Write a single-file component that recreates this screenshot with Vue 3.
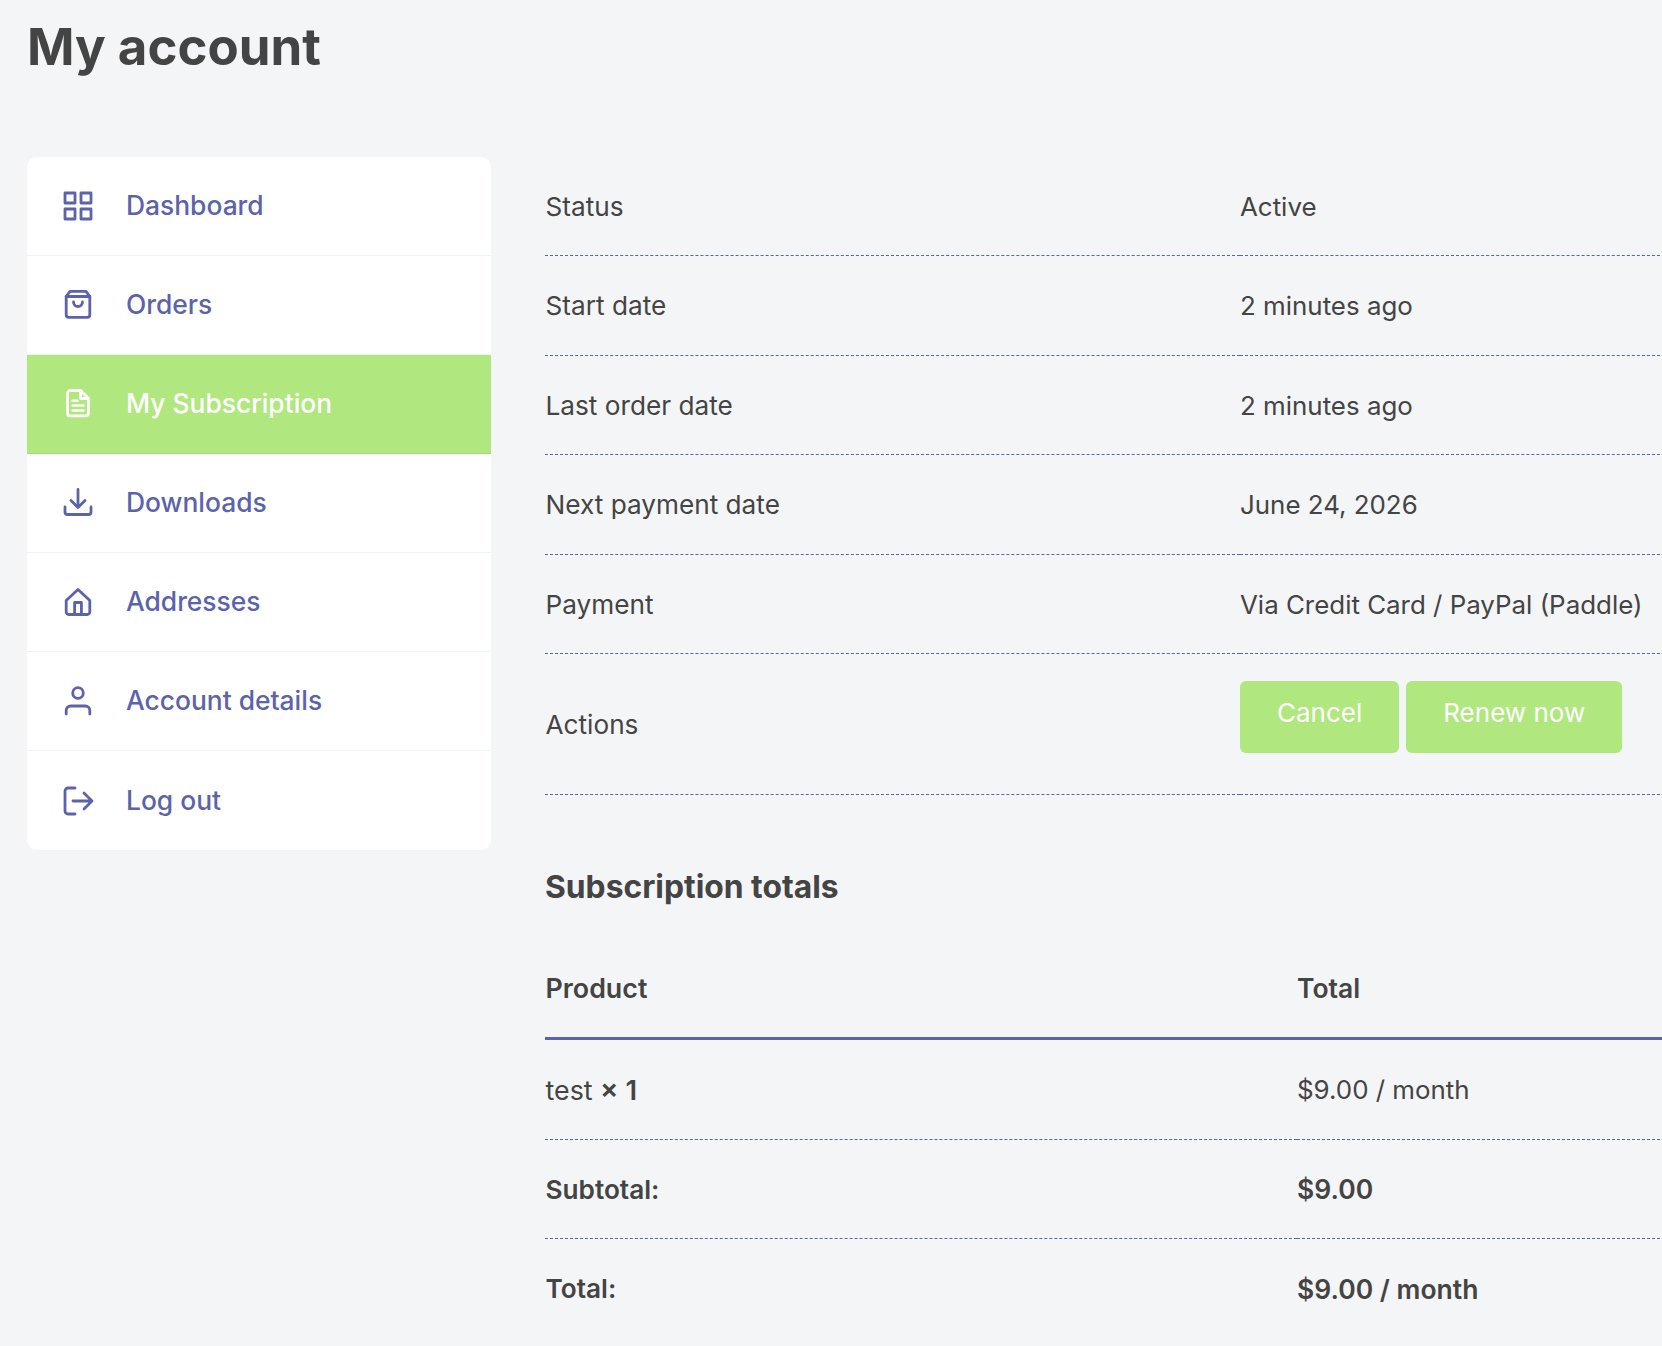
<script setup>
const menu = [
  { label: "Dashboard", icon: "grid" },
  { label: "Orders", icon: "bag" },
  { label: "My Subscription", icon: "doc", active: true },
  { label: "Downloads", icon: "download" },
  { label: "Addresses", icon: "home" },
  { label: "Account details", icon: "user" },
  { label: "Log out", icon: "logout" }
];

const details = [
  ["Status", "Active"],
  ["Start date", "2 minutes ago"],
  ["Last order date", "2 minutes ago"],
  ["Next payment date", "June 24, 2026"],
  ["Payment", "Via Credit Card / PayPal (Paddle)"]
];
</script>

<template>
  <div class="page">
    <h1>My account</h1>
    <div class="layout">
      <nav class="menu">
        <a v-for="item in menu" :key="item.label" class="menu-item" :class="{ active: item.active }" href="#">
          <svg class="icon" viewBox="0 0 32 32" fill="none" stroke="currentColor" stroke-width="2.8" stroke-linecap="round" stroke-linejoin="round">
            <template v-if="item.icon === 'grid'">
              <rect x="3" y="3" width="10" height="10" />
              <rect x="19" y="3" width="10" height="10" />
              <rect x="3" y="19" width="10" height="10" />
              <rect x="19" y="19" width="10" height="10" />
            </template>
            <template v-else-if="item.icon === 'bag'">
              <path d="M4.2 7.5 8 2.4H24L27.8 7.5V25.8a2.5 2.5 0 0 1-2.5 2.5H6.7a2.5 2.5 0 0 1-2.5-2.5Z" />
              <path d="M4.2 7.5H27.8" />
              <path d="M11.5 13a4.5 4.5 0 0 0 9 0" />
            </template>
            <template v-else-if="item.icon === 'doc'">
              <path d="M8 2.7H19L26.4 10.5V25.4a2.5 2.5 0 0 1-2.5 2.5H8.1a2.5 2.5 0 0 1-2.5-2.5V5.1A2.4 2.4 0 0 1 8 2.7Z" />
              <path d="M18.6 3V10.5H26" />
              <path d="M10.5 12.7H15.5M10.5 17.5H21.5M10.5 22.5H21.5" stroke-width="2.4" />
            </template>
            <template v-else-if="item.icon === 'download'">
              <path d="M16 2.5V20M9 13.5 16 20.5 23 13.5" />
              <path d="M3 20V25a2.5 2.5 0 0 0 2.5 2.5H26.5A2.5 2.5 0 0 0 29 25V20" />
            </template>
            <template v-else-if="item.icon === 'home'">
              <path d="M4.2 14.5 16 3.5 27.8 14.5V26a2.5 2.5 0 0 1-2.5 2.5H6.7A2.5 2.5 0 0 1 4.2 26Z" />
              <path d="M12.6 28V16.5H19.4V28" />
            </template>
            <template v-else-if="item.icon === 'user'">
              <circle cx="16" cy="8" r="5.3" />
              <path d="M4.2 29V25.5a4.5 4.5 0 0 1 4.5-4.5H23.3a4.5 4.5 0 0 1 4.5 4.5V29" />
            </template>
            <template v-else>
              <path d="M13 3H6A3 3 0 0 0 3 6V26a3 3 0 0 0 3 3H13" />
              <path d="M11 16H30M22 8 30 16 22 24" />
            </template>
          </svg>
          <span class="menu-label">{{ item.label }}</span>
        </a>
      </nav>

      <main class="content">
        <table class="details">
          <tbody>
            <tr v-for="row in details" :key="row[0]">
              <td class="first">{{ row[0] }}</td>
              <td>{{ row[1] }}</td>
            </tr>
            <tr class="actions-row">
              <td class="first">Actions</td>
              <td>
                <div class="actions">
                  <button>Cancel</button>
                  <button>Renew now</button>
                </div>
              </td>
            </tr>
          </tbody>
        </table>

        <h2>Subscription totals</h2>

        <table class="totals">
          <thead>
            <tr>
              <th class="first">Product</th>
              <th>Total</th>
            </tr>
          </thead>
          <tbody>
            <tr>
              <td class="first product">test <strong>× 1</strong></td>
              <td>$9.00 / month</td>
            </tr>
            <tr>
              <th class="first">Subtotal:</th>
              <th>$9.00</th>
            </tr>
            <tr class="last">
              <th class="first">Total:</th>
              <th>$9.00 / month</th>
            </tr>
          </tbody>
        </table>
      </main>
    </div>
  </div>
</template>

<style>
html, body {
  background: #f4f5f7;
  overflow: hidden;
}
</style>

<style scoped>
.page {
  width: 1662px;
  height: 1346px;
  overflow: hidden;
  box-sizing: border-box;
  padding-left: 27px;
  font-family: Inter, "Liberation Sans", sans-serif;
  font-size: 25.9px;
  color: #444;
}
h1 {
  margin: 0;
  height: 157px;
  font-size: 51px;
  font-weight: 700;
  line-height: 93px;
}
.layout {
  display: flex;
  align-items: flex-start;
  gap: 54px;
}
.menu {
  flex: 0 0 464px;
  display: flex;
  flex-direction: column;
  background: #fff;
  border-radius: 10px;
  overflow: hidden;
}
.menu-item {
  height: 99px;
  box-sizing: border-box;
  display: flex;
  align-items: center;
  gap: 32.5px;
  padding-left: 34.5px;
  color: #5b63aa;
  text-decoration: none;
  border-bottom: 1px solid #f1f2f4;
}
.menu-item:last-child {
  border-bottom: 0;
}
.menu-item.active {
  background: #b0e77f;
  color: #fff;
  border-bottom-color: #a6dc76;
}
.menu-label {
  font-size: 26.4px;
  font-weight: 450;
  padding-bottom: 3px;
}
.menu-item:last-child .menu-label {
  padding-bottom: 1px;
}
.icon {
  width: 32px;
  height: 32px;
  flex: none;
}
.content {
  flex: 0 0 1120px;
}
table {
  width: 100%;
  table-layout: fixed;
  border-collapse: collapse;
}
td, th {
  padding: 0;
  text-align: left;
  border-bottom: 1px dashed #5b63aa;
}
.first {
  font-size: 26.2px;
  text-indent: 0.5px;
}
.details td {
  height: 99.3px;
  box-sizing: border-box;
}
.details tr:first-child td {
  height: 98.5px;
}
.details tr:nth-child(2) td {
  height: 100px;
}
.details tr:nth-child(5) td {
  padding-top: 2px;
}
.details .first {
  width: 695px;
}
.details .actions-row td {
  height: 141px;
}
.details .actions-row .first {
  padding-top: 2px;
}
.actions {
  display: flex;
  gap: 7px;
  padding-bottom: 13px;
}
button {
  height: 72px;
  padding: 0 37px 9px;
  border: 0;
  border-radius: 6px;
  background: #b0e77f;
  color: #fff;
  font: inherit;
  font-size: 26px;
}
h2 {
  margin: 0;
  height: 145px;
  box-sizing: border-box;
  padding-top: 66px;
  font-size: 31.8px;
  line-height: 52px;
  font-weight: 700;
}
.totals .first {
  width: 752px;
}
.totals td, .totals th {
  height: 99px;
  box-sizing: border-box;
}
th, strong {
  font-weight: 600;
  font-size: 26.5px;
}
.totals thead th {
  height: 99px;
  padding-bottom: 1px;
  border-bottom: 3px solid #5b63aa;
}
.totals td {
  height: 101px;
}
.totals .product {
  font-size: 26.8px;
}
.totals .product strong {
  font-size: 27.4px;
}
.totals thead .first {
  font-size: 26.8px;
}
.totals .last th {
  border-bottom: 0;
}
</style>
